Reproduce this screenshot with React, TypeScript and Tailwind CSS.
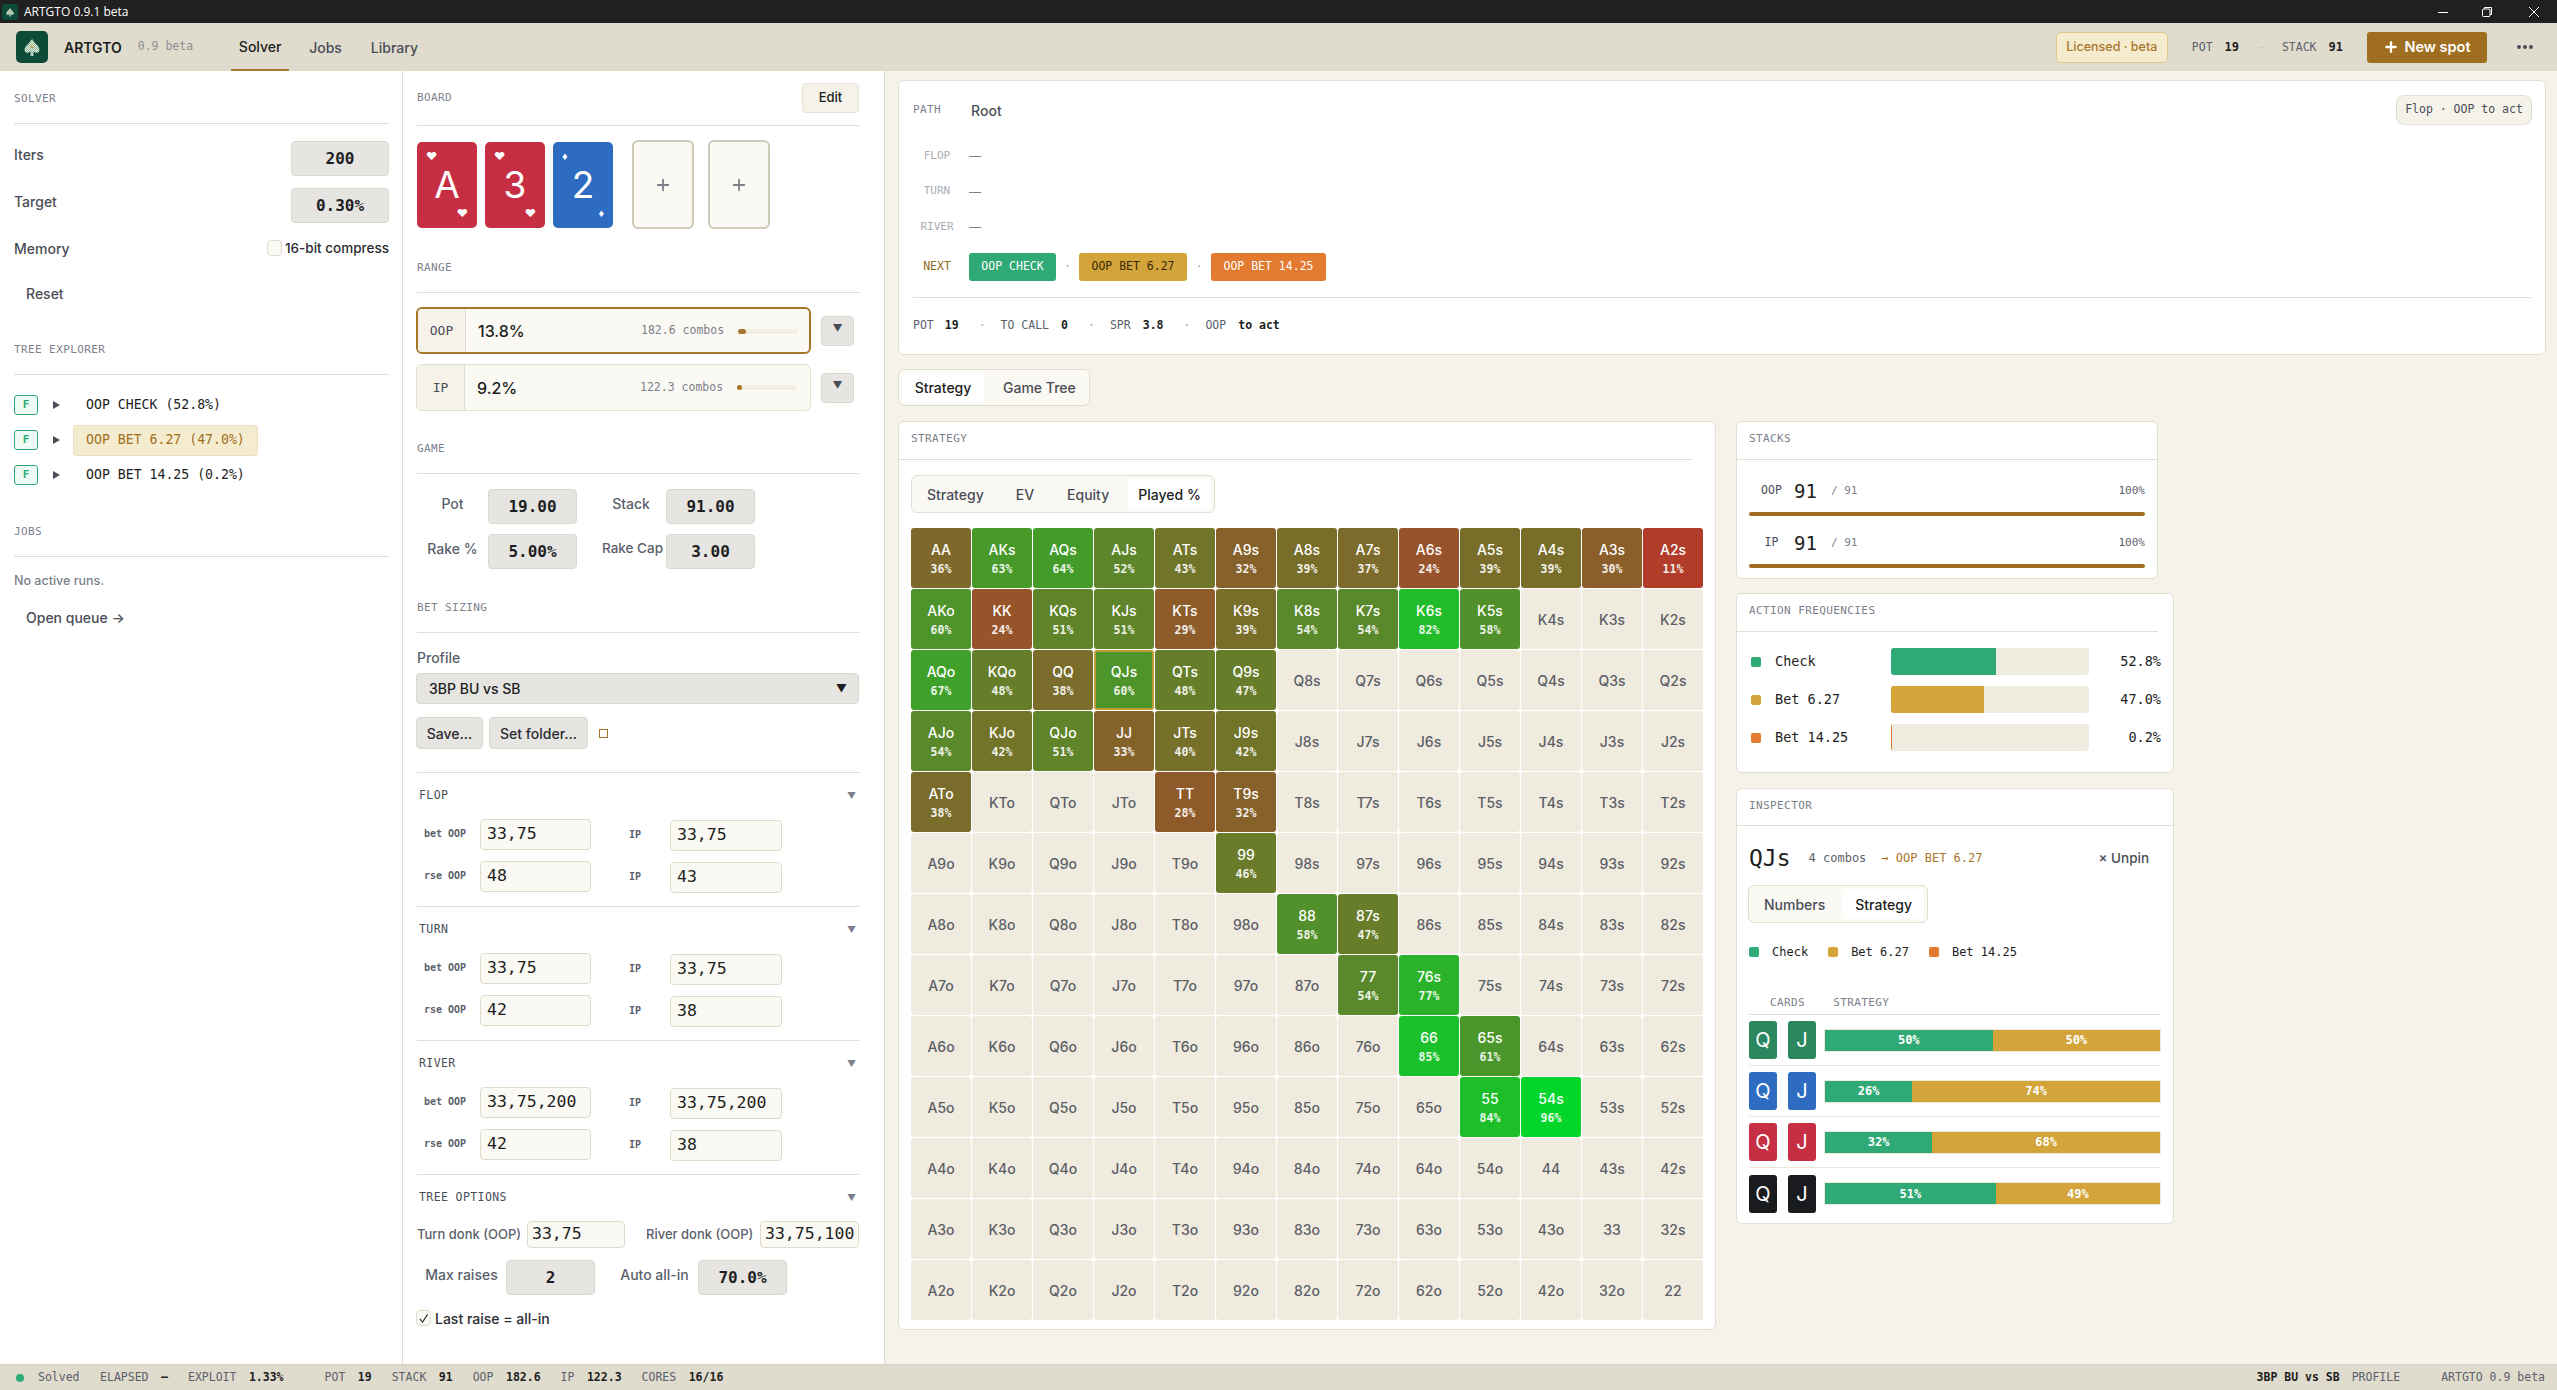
import { Plus } from "lucide-react";
import type { ReactNode } from "react";

const MONO = "font-['DejaVu_Sans_Mono',monospace]";

const ranks = ["A", "K", "Q", "J", "T", "9", "8", "7", "6", "5", "4", "3", "2"];

const played: Record<string, number> = {
  AA: 36, AKs: 63, AQs: 64, AJs: 52, ATs: 43, A9s: 32, A8s: 39, A7s: 37, A6s: 24, A5s: 39, A4s: 39, A3s: 30, A2s: 11,
  AKo: 60, KK: 24, KQs: 51, KJs: 51, KTs: 29, K9s: 39, K8s: 54, K7s: 54, K6s: 82, K5s: 58,
  AQo: 67, KQo: 48, QQ: 38, QJs: 60, QTs: 48, Q9s: 47,
  AJo: 54, KJo: 42, QJo: 51, JJ: 33, JTs: 40, J9s: 42,
  ATo: 38, TT: 28, T9s: 32,
  "99": 46,
  "88": 58, "87s": 47,
  "77": 54, "76s": 77,
  "66": 85, "65s": 61,
  "55": 84, "54s": 96,
};

function handName(row: number, col: number) {
  if (row === col) return ranks[row] + ranks[col];
  if (col > row) return ranks[row] + ranks[col] + "s";
  return ranks[col] + ranks[row] + "o";
}

// red -> green ramp, same as the played % heat map
function heat(p: number) {
  return `rgb(${Math.round(200 - 2.05 * p)}, ${Math.round(40 + 1.8 * p)}, 42)`;
}

function SectionHead({ children, className }: { children: ReactNode; className: string }) {
  return (
    <div className={`flex items-center justify-between border-b border-[#e2decf] ${className}`}>
      {children}
    </div>
  );
}

function Label({ children }: { children: ReactNode }) {
  return <span className={`${MONO} text-[11px] leading-[16px] tracking-[0.4px] uppercase text-[#7c808c]`}>{children}</span>;
}

function GrayField({ value, className = "" }: { value: string; className?: string }) {
  return (
    <div
      className={`${MONO} flex items-center justify-center rounded-[4px] border border-[#dcd9cc] bg-[#e6e5e2] text-[16px] font-semibold text-[#1d1e22] ${className}`}
    >
      {value}
    </div>
  );
}

function LightField({ value, className = "" }: { value: string; className?: string }) {
  return (
    <div
      className={`${MONO} flex items-center rounded-[4px] border border-[#dfdbc9] bg-[#fbf9f3] text-[16.5px] font-medium text-[#1d1e22] ${className}`}
    >
      {value}
    </div>
  );
}

function BoardCard({ rank, suit, color }: { rank: string; suit: string; color: string }) {
  return (
    <div className={`relative flex h-[86px] w-[60px] items-center justify-center rounded-[5px] text-white ${color}`}>
      <span className="absolute left-[9px] top-[9px] text-[11px] leading-none">{suit}</span>
      <span className="text-[37px] leading-none font-normal">{rank}</span>
      <span className="absolute bottom-[9px] right-[9px] text-[11px] leading-none">{suit}</span>
    </div>
  );
}

function EmptyCard() {
  return (
    <div className="flex h-[89px] w-[62px] items-center justify-center rounded-[6px] border-2 border-[#cfc9b8] bg-[#fbf9f3] text-[#7c808c]">
      <Plus size={18} strokeWidth={2.4} />
    </div>
  );
}

function TreeRow({ text, active }: { text: string; active?: boolean }) {
  return (
    <div className="flex h-[20px] items-center">
      <span className={`${MONO} flex h-[20px] w-[24px] items-center justify-center rounded-[3px] border border-[#2fa975] bg-[#eefaf4] text-[11px] font-semibold text-[#2fa975]`}>
        F
      </span>
      <span className="ml-[15px] h-0 w-0 border-y-[4px] border-l-[7px] border-y-transparent border-l-[#4a4d57]" />
      {active ? (
        <span className={`${MONO} ml-[13px] flex h-[31px] w-[185px] items-center rounded-[3px] border border-[#eadfbe] bg-[#f5ebcf] pl-[12px] text-[13.2px] text-[#a0701f]`}>
          {text}
        </span>
      ) : (
        <span className={`${MONO} ml-[26px] text-[13.2px] text-[#1d1e22]`}>{text}</span>
      )}
    </div>
  );
}

function RangeRow({ side, pct, combos, fill, active }: { side: string; pct: string; combos: string; fill: string; active?: boolean }) {
  return (
    <div className={`flex h-[47px] w-[395px] items-stretch overflow-hidden rounded-[6px] bg-[#fbf9f3] ${active ? "border-2 border-[#a8762a]" : "border border-[#e2decf]"}`}>
      <span className={`${MONO} flex w-[48px] items-center justify-center border-r border-[#e2decf] bg-[#f5f2ea] text-[13px] font-medium text-[#4a4d57]`}>
        {side}
      </span>
      <span className="ml-[12px] flex w-[150px] items-center text-[16px] font-medium text-[#1d1e22]">{pct}</span>
      <span className={`${MONO} ml-[13px] flex w-[86px] items-center text-[11.5px] text-[#7c808c]`}>{combos}</span>
      <span className="ml-[11px] mt-[20px] h-[5px] w-[60px] rounded-full bg-[#f1eee4]">
        <span className={`block h-[5px] rounded-full bg-[#a8762a] ${fill}`} />
      </span>
    </div>
  );
}

function ChevronBtn() {
  return (
    <div className="ml-[10px] flex h-[30px] w-[33px] items-center justify-center rounded-[4px] border border-[#dcd9cc] bg-[#e6e5e2] pb-[4px] text-[10px] text-[#4a4d57]">
      ▼
    </div>
  );
}

function SizingHead({ name }: { name: string }) {
  return (
    <div className="flex h-[46px] items-center justify-between pl-[2px] pr-[3px]">
      <span className={`${MONO} text-[11.5px] font-medium tracking-[0.4px] text-[#4a4d57]`}>{name}</span>
      <span className="text-[9px] text-[#7c808c]">▼</span>
    </div>
  );
}

function SizingSection({ name, rows }: { name: string; rows: [string, string, string][] }) {
  return (
    <div className="border-t border-[#e2decf] pb-[13px]">
      <SizingHead name={name} />
      <div className="flex flex-col gap-[10px]">
        {rows.map(([kind, oop, ip]) => (
          <div key={kind} className="flex items-start">
            <span className={`${MONO} flex h-[28px] w-[63px] items-center pl-[7px] text-[10px] font-semibold text-[#5b5f6b]`}>
              {kind} OOP
            </span>
            <LightField value={oop} className="h-[31px] w-[111px] pl-[6px]" />
            <span className={`${MONO} flex h-[30px] w-[79px] items-center pl-[38px] text-[10px] font-semibold text-[#5b5f6b]`}>IP</span>
            <LightField value={ip} className="mt-[1px] h-[31px] w-[112px] pl-[6px]" />
          </div>
        ))}
      </div>
    </div>
  );
}

function CheckBox({ checked }: { checked?: boolean }) {
  return (
    <span className="flex h-[16px] w-[15px] items-center justify-center rounded-[4px] border border-[#dfdbc9] bg-[#fbf9f3]">
      {checked && (
        <svg width="11" height="11" viewBox="0 0 12 12" fill="none" stroke="#2b2c31" strokeWidth="1.2">
          <path d="M2 6.5 L5 10 L10.5 1.5" />
        </svg>
      )}
    </span>
  );
}

function Swatch({ color }: { color: string }) {
  return <span className={`block h-[10px] w-[10px] rounded-[2px] ${color}`} />;
}

function MiniCard({ rank, color, className = "" }: { rank: string; color: string; className?: string }) {
  return (
    <span className={`flex h-[38px] w-[28px] items-center justify-center rounded-[3px] text-[20px] text-white ${color} ${className}`}>
      {rank}
    </span>
  );
}

function ComboRow({ color, check, bet, last }: { color: string; check: number; bet: number; last?: boolean }) {
  return (
    <div className={`flex h-[51px] items-center ${last ? "" : "border-b border-[#e9e6da]"}`}>
      <MiniCard rank="Q" color={color} />
      <MiniCard rank="J" color={color} className="ml-[11px]" />
      <div className={`${MONO} ml-[8px] flex h-[23px] w-[337px] border border-[#ece9dc] text-[12px] font-semibold text-white`}>
        <span className="flex items-center justify-center bg-[#2fa975]" style={{ width: `${check}%` }}>
          {check}%
        </span>
        <span className="flex items-center justify-center bg-[#d2a43a]" style={{ width: `${bet}%` }}>
          {bet}%
        </span>
      </div>
    </div>
  );
}

function StatPair({ k, v, className = "" }: { k: string; v: string; className?: string }) {
  return (
    <span className={`${MONO} text-[12px] ${className}`}>
      <span className="text-[11.5px] text-[#5b5f6b]">{k}</span>
      <span className="ml-[12px] font-semibold text-[#1d1e22]">{v}</span>
    </span>
  );
}

// dithered spade mark, used in the title bar and the header
function Logo({ size, id }: { size: number; id: string }) {
  return (
    <svg width={size} height={size} viewBox="0 0 32 32">
      <defs>
        <pattern id={id} width="2" height="2" patternUnits="userSpaceOnUse">
          <rect width="2" height="2" fill="#8fb09a" />
          <rect width="1" height="1" fill="#e4efdc" />
          <rect x="1" y="1" width="1" height="1" fill="#e4efdc" />
        </pattern>
      </defs>
      <rect width="32" height="32" rx="5" fill="#0e4a38" />
      <path
        d="M16 8 L19 12 L22 15 L23.5 18 L23 21 L20.5 22 L17.5 20.5 L17.5 25 L14.5 25 L14.5 20.5 L11.5 22 L9 21 L8.5 18 L10 15 L13 12 Z"
        fill={`url(#${id})`}
      />
      <rect x="15" y="15" width="2" height="2" fill="#c9913a" />
    </svg>
  );
}

function StrategyGrid() {
  return (
    <div className="ml-[12px] mt-[15px] grid w-[792px] grid-cols-[repeat(13,60px)] grid-rows-[repeat(13,60px)] gap-[1px]">
      {ranks.map((_, row) =>
        ranks.map((_, col) => {
          const name = handName(row, col);
          const pct = played[name];
          if (pct === undefined) {
            return (
              <div key={name} className="flex items-center justify-center rounded-[3px] bg-[#efebdf] text-[14px] font-medium text-[#5c5f66]">
                {name}
              </div>
            );
          }
          return (
            <div
              key={name}
              className={`flex flex-col items-center justify-center rounded-[3px] pt-[2px] text-white ${name === "QJs" ? "border-2 border-[#c09a35]" : ""}`}
              style={{ backgroundColor: heat(pct) }}
            >
              <span className="text-[14px] leading-[18px] font-medium">{name}</span>
              <span className={`${MONO} mt-[1px] text-[11.5px] leading-[18px] font-semibold text-white/90`}>{pct}%</span>
            </div>
          );
        }),
      )}
    </div>
  );
}

export default function App() {
  return (
    <div className="flex h-screen w-full flex-col overflow-hidden bg-[#f5f2ea] font-['Inter',sans-serif] text-[#1d1e22]">
      {/* window title bar */}
      <div className="flex h-[23px] shrink-0 items-center bg-[#202020] pl-[2px] text-white">
        <Logo size={16} id="logo-small" />
        <span className="ml-[6px] text-[12px] font-['Open_Sans',sans-serif]">ARTGTO 0.9.1 beta</span>
        <div className="ml-auto flex items-center">
          <svg width="12" height="12" viewBox="0 0 12 12" stroke="#fff" fill="none" className="mr-[32px]">
            <path d="M1 6.5h10" />
          </svg>
          <svg width="12" height="12" viewBox="0 0 12 12" stroke="#fff" fill="none" className="mr-[35px]">
            <rect x="1.5" y="3" width="7.5" height="7.5" rx="1" />
            <path d="M3.5 3 V1.5 H10.5 V8.5 H9" />
          </svg>
          <svg width="12" height="12" viewBox="0 0 12 12" stroke="#fff" fill="none" className="mr-[17px]">
            <path d="M1 1 L11 11 M11 1 L1 11" />
          </svg>
        </div>
      </div>

      {/* app header */}
      <header className="flex h-[48px] shrink-0 items-center bg-[#dfdccd] pl-[16px] pr-[24px]">
        <Logo size={32} id="logo-large" />
        <span className="ml-[16px] text-[14px] font-semibold">ARTGTO</span>
        <span className={`${MONO} ml-[16px] text-[11.5px] text-[#8c8f94]`}>0.9 beta</span>
        <nav className="ml-[38px] flex h-full items-stretch text-[14px] font-medium text-[#4a4d57]">
          <span className="flex w-[58px] items-center justify-center border-b-2 border-[#a8762a] text-[#1d1e22]">Solver</span>
          <span className="ml-[20px] flex items-center">Jobs</span>
          <span className="ml-[29px] flex items-center">Library</span>
        </nav>
        <div className="ml-auto flex items-center">
          <span className="flex h-[31px] w-[112px] items-center justify-center rounded-[5px] border border-[#e0c78e] bg-[#f5ebcf] text-[12.5px] font-medium text-[#a8762a]">
            Licensed · beta
          </span>
          <StatPair k="POT" v="19" className="ml-[24px]" />
          <span className="ml-[21px] text-[10px] text-[#a9a9a4]">·</span>
          <StatPair k="STACK" v="91" className="ml-[19px]" />
          <span className="ml-[24px] flex h-[31px] w-[120px] items-center justify-center gap-[5px] rounded-[3px] bg-[#a06e20] text-[14.5px] font-semibold text-white">
            <Plus size={16} strokeWidth={3.5} />
            New spot
          </span>
          <span className="ml-[30px] flex gap-[2px]">
            <span className="h-[4px] w-[4px] rounded-full bg-[#4a4d57]" />
            <span className="h-[4px] w-[4px] rounded-full bg-[#4a4d57]" />
            <span className="h-[4px] w-[4px] rounded-full bg-[#4a4d57]" />
          </span>
        </div>
      </header>

      <div className="flex min-h-0 flex-1">
        {/* solver sidebar */}
        <aside className="w-[403px] shrink-0 border-r border-[#e2decf] bg-white pl-[14px] pr-[13px]">
          <SectionHead className="h-[53px] pt-[3px]">
            <Label>Solver</Label>
          </SectionHead>
          <div className="mt-[17px] flex items-center justify-between text-[14px] font-medium text-[#4a4d57]">
            <span className="pb-[8px]">Iters</span>
            <GrayField value="200" className="h-[35px] w-[98px]" />
          </div>
          <div className="mt-[12px] flex items-center justify-between text-[14px] font-medium text-[#4a4d57]">
            <span className="pb-[8px]">Target</span>
            <GrayField value="0.30%" className="h-[35px] w-[98px]" />
          </div>
          <div className="mt-[17px] flex h-[16px] items-center justify-between text-[14px] font-medium text-[#4a4d57]">
            <span>Memory</span>
            <span className="flex items-center gap-[3px] text-[13.5px] text-[#2b2c31]">
              <CheckBox />
              16-bit compress
            </span>
          </div>
          <div className="mt-[21px] flex h-[32px] items-center pl-[12px] text-[14px] font-medium text-[#4a4d57]">Reset</div>

          <SectionHead className="mt-[17px] h-[49px]">
            <Label>Tree Explorer</Label>
          </SectionHead>
          <div className="mt-[20px] flex flex-col gap-[15px]">
            <TreeRow text="OOP CHECK (52.8%)" />
            <TreeRow text="OOP BET 6.27 (47.0%)" active />
            <TreeRow text="OOP BET 14.25 (0.2%)" />
          </div>

          <SectionHead className="mt-[23px] h-[49px]">
            <Label>Jobs</Label>
          </SectionHead>
          <div className="mt-[16px] text-[12.5px] font-medium leading-[16px] text-[#7c808c]">No active runs.</div>
          <div className="mt-[12px] flex h-[32px] items-center pl-[12px] text-[14px] font-medium text-[#4a4d57]">Open queue →</div>
        </aside>

        {/* board / range / sizing column */}
        <section className="w-[482px] shrink-0 border-r border-[#e2decf] bg-white pl-[14px] pr-[25px]">
          <SectionHead className="h-[55px]">
            <Label>Board</Label>
            <span className="flex h-[30px] w-[57px] items-center justify-center rounded-[4px] border border-[#e6e2d4] bg-[#f5f2ea] text-[13px] font-medium">Edit</span>
          </SectionHead>
          <div className="mt-[14px] flex h-[89px] items-center">
            <BoardCard rank="A" suit="♥" color="bg-[#c62f43]" />
            <div className="w-[8px]" />
            <BoardCard rank="3" suit="♥" color="bg-[#c62f43]" />
            <div className="w-[8px]" />
            <BoardCard rank="2" suit="♦" color="bg-[#2d6cc0]" />
            <div className="w-[19px]" />
            <EmptyCard />
            <div className="w-[14px]" />
            <EmptyCard />
          </div>

          <SectionHead className="mt-[15px] h-[49px]">
            <Label>Range</Label>
          </SectionHead>
          <div className="ml-[-1px] mt-[14px] flex items-center">
            <RangeRow side="OOP" pct="13.8%" combos="182.6 combos" fill="w-[8px]" active />
            <ChevronBtn />
          </div>
          <div className="ml-[-1px] mt-[10px] flex items-center">
            <RangeRow side="IP" pct="9.2%" combos="122.3 combos" fill="w-[5px]" />
            <ChevronBtn />
          </div>

          <SectionHead className="mt-[14px] h-[49px]">
            <Label>Game</Label>
          </SectionHead>
          <div className="mt-[15px] flex items-center text-[14px] font-medium text-[#5b5f6b]">
            <span className="w-[71px] pb-[6px] text-center">Pot</span>
            <GrayField value="19.00" className="h-[35px] w-[89px]" />
            <span className="ml-[25px] mr-[6px] w-[58px] whitespace-nowrap pb-[6px] text-center">Stack</span>
            <GrayField value="91.00" className="h-[35px] w-[89px]" />
          </div>
          <div className="mt-[10px] flex items-center text-[14px] font-medium text-[#5b5f6b]">
            <span className="w-[71px] pb-[6px] text-center">Rake %</span>
            <GrayField value="5.00%" className="h-[35px] w-[89px]" />
            <span className="ml-[25px] mr-[6px] w-[58px] whitespace-nowrap pb-[6px] text-center text-[13.5px]">Rake Cap</span>
            <GrayField value="3.00" className="h-[35px] w-[89px]" />
          </div>

          <SectionHead className="mt-[15px] h-[49px]">
            <Label>Bet Sizing</Label>
          </SectionHead>
          <div className="mt-[16px] text-[14px] leading-[17px] font-medium text-[#5b5f6b]">Profile</div>
          <div className="ml-[-1px] mt-[7px] flex h-[31px] items-center justify-between rounded-[4px] border border-[#dcd9cc] bg-[#e6e5e2] pl-[12px] pr-[11px] text-[14px] font-medium">
            3BP BU vs SB
            <span className="text-[11px] leading-none">▼</span>
          </div>
          <div className="ml-[-1px] mt-[13px] flex items-center gap-[6px] text-[14px] font-medium text-[#2b2c31]">
            <span className="flex h-[32px] w-[67px] items-center justify-center rounded-[4px] border border-[#dcd9cc] bg-[#e6e5e2]">Save…</span>
            <span className="flex h-[32px] w-[99px] items-center justify-center rounded-[4px] border border-[#dcd9cc] bg-[#e6e5e2]">Set folder…</span>
            <span className="ml-[5px] h-[9px] w-[9px] border border-[#a8762a]" />
          </div>

          <div className="mt-[23px]">
            <SizingSection name="FLOP" rows={[["bet", "33,75", "33,75"], ["rse", "48", "43"]]} />
            <SizingSection name="TURN" rows={[["bet", "33,75", "33,75"], ["rse", "42", "38"]]} />
            <SizingSection name="RIVER" rows={[["bet", "33,75,200", "33,75,200"], ["rse", "42", "38"]]} />
            <div className="border-t border-[#e2decf]">
              <SizingHead name="TREE OPTIONS" />
              <div className="flex items-center text-[13px] font-medium text-[#5b5f6b]">
                <span className="w-[110px] whitespace-nowrap">Turn donk (OOP)</span>
                <LightField value="33,75" className="h-[27px] w-[98px] pl-[4px]" />
                <span className="ml-[21px] w-[114px] whitespace-nowrap">River donk (OOP)</span>
                <LightField value="33,75,100" className="h-[27px] w-[99px] pl-[4px]" />
              </div>
              <div className="mt-[12px] flex items-center text-[14px] font-medium text-[#5b5f6b]">
                <span className="w-[89px] pb-[6px] text-center">Max raises</span>
                <GrayField value="2" className="h-[35px] w-[89px]" />
                <span className="w-[103px] pb-[6px] pl-[16px] text-center">Auto all-in</span>
                <GrayField value="70.0%" className="h-[35px] w-[89px]" />
              </div>
              <div className="ml-[-1px] mt-[15px] flex h-[16px] items-center gap-[4px] text-[14px] font-medium text-[#2b2c31]">
                <CheckBox checked />
                Last raise = all-in
              </div>
            </div>
          </div>
        </section>

        {/* main area */}
        <main className="min-w-0 flex-1 pl-[13px] pr-[11px] pt-[9px]">
          <div className="h-[275px] rounded-[6px] border border-[#e2decf] bg-white pt-[14px]">
            <div className="flex h-[30px] items-center justify-between pl-[14px] pr-[13px]">
              <div className="flex items-center">
                <Label>Path</Label>
                <span className="ml-[30px] text-[14px] font-medium text-[#4a4d57]">Root</span>
              </div>
              <span className={`${MONO} flex h-[30px] w-[136px] items-center justify-center rounded-[8px] border border-[#e2decf] bg-[#f5f2ea] text-[11.5px] text-[#4a4d57]`}>
                Flop · OOP to act
              </span>
            </div>
            {["FLOP", "TURN", "RIVER"].map((street, i) => (
              <div key={street} className={`flex h-[20px] items-center pl-[14px] ${i === 0 ? "mt-[21px]" : "mt-[15.5px]"}`}>
                <span className={`${MONO} w-[48px] text-center text-[11px] text-[#a9acb4]`}>{street}</span>
                <span className="ml-[8px] text-[12px] text-[#7c808c]">—</span>
              </div>
            ))}
            <div className={`${MONO} mt-[16px] flex h-[28px] items-center pl-[14px] text-[11.5px] font-medium`}>
              <span className="w-[48px] text-center text-[#8f6a22]">NEXT</span>
              <span className="ml-[8px] flex h-[28px] w-[87px] items-center justify-center rounded-[3px] bg-[#2fa975] text-white">OOP CHECK</span>
              <span className="w-[23px] text-center text-[#a9acb4]">·</span>
              <span className="flex h-[28px] w-[108px] items-center justify-center rounded-[3px] bg-[#d2a43a] text-[#3a2a08]">OOP BET 6.27</span>
              <span className="w-[24px] text-center text-[#a9acb4]">·</span>
              <span className="flex h-[28px] w-[115px] items-center justify-center rounded-[3px] bg-[#e27a2f] text-white">OOP BET 14.25</span>
            </div>
            <div className="mx-[14px] mt-[16px] border-t border-[#e2decf]" />
            <div className={`${MONO} flex h-[56px] items-center pl-[14px] text-[11.5px] text-[#5b5f6b]`}>
              <span>POT</span>
              <span className="ml-[11px] font-semibold text-[#1d1e22]">19</span>
              <span className="ml-[20px] text-[#a9acb4]">·</span>
              <span className="ml-[15px]">TO CALL</span>
              <span className="ml-[12px] font-semibold text-[#1d1e22]">0</span>
              <span className="ml-[20px] text-[#a9acb4]">·</span>
              <span className="ml-[15px]">SPR</span>
              <span className="ml-[12px] font-semibold text-[#1d1e22]">3.8</span>
              <span className="ml-[20px] text-[#a9acb4]">·</span>
              <span className="ml-[15px]">OOP</span>
              <span className="ml-[12px] font-semibold text-[#1d1e22]">to act</span>
            </div>
          </div>

          <div className="mt-[14px] flex h-[37px] w-[192px] items-center rounded-[6px] border border-[#e2decf] bg-[#fbf9f3] p-[3px] text-[14px] font-medium">
            <span className="flex h-[29px] w-[82px] items-center justify-center rounded-[3px] bg-white">Strategy</span>
            <span className="ml-[19px] text-[#4a4d57]">Game Tree</span>
          </div>

          <div className="mt-[15px] flex items-start gap-[20px]">
            {/* strategy card */}
            <div className="h-[909px] w-[818px] shrink-0 rounded-[6px] border border-[#e2decf] bg-white">
              <div className="flex h-[38px] w-[793px] items-center border-b border-[#e2decf] pb-[3px] pl-[12px]">
                <Label>Strategy</Label>
              </div>
              <div className="ml-[12px] mt-[15px] flex h-[38px] w-[304px] items-center rounded-[6px] border border-[#e2decf] bg-[#fbf9f3] p-[3px] text-[14px] font-medium text-[#4a4d57]">
                <span className="ml-[12px]">Strategy</span>
                <span className="ml-[32px]">EV</span>
                <span className="ml-[33px]">Equity</span>
                <span className="ml-[19px] flex h-[30px] w-[84px] items-center justify-center rounded-[3px] bg-white text-[#1d1e22]">Played %</span>
              </div>
              <StrategyGrid />
            </div>

            <div className="flex w-[438px] shrink-0 flex-col gap-[14px]">
              {/* stacks */}
              <div className="h-[158px] w-[422px] rounded-[6px] border border-[#e2decf] bg-white">
                <div className="flex h-[38px] items-center border-b border-[#e2decf] pb-[3px] pl-[12px]">
                  <Label>Stacks</Label>
                </div>
                {["OOP", "IP"].map((side, i) => (
                  <div key={side} className={`mx-[12px] ${i === 0 ? "mt-[21px]" : "mt-[17px]"}`}>
                    <div className={`${MONO} flex h-[20px] items-center`}>
                      <span className="w-[45px] text-center text-[11.5px] font-medium text-[#4a4d57]">{side}</span>
                      <span className="text-[19px] font-medium text-[#1d1e22]">91</span>
                      <span className="ml-[14px] text-[11px] text-[#7c808c]">/ 91</span>
                      <span className="ml-auto text-[11px] font-medium text-[#5b5f6b]">100%</span>
                    </div>
                    <div className="mt-[11px] h-[4px] rounded-full bg-[#a06e20]" />
                  </div>
                ))}
              </div>

              {/* action frequencies */}
              <div className="h-[180px] rounded-[6px] border border-[#e2decf] bg-white">
                <div className="flex h-[38px] w-[421px] items-center border-b border-[#e2decf] pb-[4px] pl-[12px]">
                  <Label>Action Frequencies</Label>
                </div>
                <div className={`${MONO} mt-[16px] flex flex-col gap-[11px] text-[13.5px] font-medium`}>
                  {[
                    { label: "Check", val: "52.8%", color: "bg-[#2fa975]", width: "w-[105px]" },
                    { label: "Bet 6.27", val: "47.0%", color: "bg-[#d2a43a]", width: "w-[93px]" },
                    { label: "Bet 14.25", val: "0.2%", color: "bg-[#e27a2f]", width: "w-[1px]" },
                  ].map((row) => (
                    <div key={row.label} className="flex h-[27px] items-center pl-[14px]">
                      <Swatch color={row.color} />
                      <span className="ml-[14px] w-[116px]">{row.label}</span>
                      <span className="h-[27px] w-[198px] overflow-hidden rounded-[3px] bg-[#efebdf]">
                        <span className={`block h-full ${row.color} ${row.width}`} />
                      </span>
                      <span className="ml-auto pr-[12px]">{row.val}</span>
                    </div>
                  ))}
                </div>
              </div>

              {/* inspector */}
              <div className="mt-[1px] h-[436px] rounded-[6px] border border-[#e2decf] bg-white">
                <div className="flex h-[37px] items-center border-b border-[#e2decf] pb-[3px] pl-[12px]">
                  <Label>Inspector</Label>
                </div>
                <div className="mt-[16px] flex h-[32px] items-center pl-[12px] pr-[24px]">
                  <span className={`${MONO} text-[23px] font-medium`}>QJs</span>
                  <span className={`${MONO} ml-[18px] text-[12px] text-[#5b5f6b]`}>4 combos</span>
                  <span className={`${MONO} ml-[15px] text-[12px] text-[#a8762a]`}>→ OOP BET 6.27</span>
                  <span className="ml-auto text-[13.5px] font-medium text-[#4a4d57]">× Unpin</span>
                </div>
                <div className="ml-[11px] mt-[11px] flex h-[38px] w-[180px] items-center rounded-[6px] border border-[#e2decf] bg-[#fbf9f3] p-[3px] text-[14px] font-medium text-[#4a4d57]">
                  <span className="ml-[12px]">Numbers</span>
                  <span className="ml-[18px] flex h-[30px] w-[82px] items-center justify-center rounded-[3px] bg-white text-[#1d1e22]">Strategy</span>
                </div>
                <div className={`${MONO} ml-[12px] mt-[20px] flex h-[18px] items-center text-[12px] font-medium`}>
                  <Swatch color="bg-[#2fa975]" />
                  <span className="ml-[13px]">Check</span>
                  <span className="ml-[20px]"><Swatch color="bg-[#d2a43a]" /></span>
                  <span className="ml-[13px]">Bet 6.27</span>
                  <span className="ml-[20px]"><Swatch color="bg-[#e27a2f]" /></span>
                  <span className="ml-[13px]">Bet 14.25</span>
                </div>
                <div className="mx-[12px] mt-[27px] flex h-[27px] items-start border-b border-[#e2decf]">
                  <span className="ml-[21px]"><Label>Cards</Label></span>
                  <span className="ml-[28px]"><Label>Strategy</Label></span>
                </div>
                <div className="mx-[12px]">
                  <ComboRow color="bg-[#2a875f]" check={50} bet={50} />
                  <ComboRow color="bg-[#2d6cc0]" check={26} bet={74} />
                  <ComboRow color="bg-[#c62f43]" check={32} bet={68} />
                  <ComboRow color="bg-[#1a1b1f]" check={51} bet={49} last />
                </div>
              </div>
            </div>
          </div>
        </main>
      </div>

      {/* status bar */}
      <footer className={`${MONO} flex h-[26px] shrink-0 items-center border-t border-[#d8d5c6] bg-[#dfdccd] pl-[16px] pr-[12px] text-[11.5px] text-[#5b5f6b]`}>
        <span className="h-[8px] w-[8px] rounded-full bg-[#2fa975]" />
        <span className="ml-[14px]">Solved</span>
        <span className="ml-[20.5px]">ELAPSED</span>
        <span className="ml-[12.5px] font-semibold text-[#1d1e22]">—</span>
        <span className="ml-[20px]">EXPLOIT</span>
        <span className="ml-[12.5px] font-semibold text-[#1d1e22]">1.33%</span>
        <span className="ml-[41px]">POT</span>
        <span className="ml-[12.5px] font-semibold text-[#1d1e22]">19</span>
        <span className="ml-[20px]">STACK</span>
        <span className="ml-[12.5px] font-semibold text-[#1d1e22]">91</span>
        <span className="ml-[20px]">OOP</span>
        <span className="ml-[12.5px] font-semibold text-[#1d1e22]">182.6</span>
        <span className="ml-[20px]">IP</span>
        <span className="ml-[12.5px] font-semibold text-[#1d1e22]">122.3</span>
        <span className="ml-[20px]">CORES</span>
        <span className="ml-[12.5px] font-semibold text-[#1d1e22]">16/16</span>
        <span className="ml-auto font-semibold text-[#1d1e22]">3BP BU vs SB</span>
        <span className="ml-[12px]">PROFILE</span>
        <span className="ml-[41px]">ARTGTO 0.9 beta</span>
      </footer>
    </div>
  );
}
